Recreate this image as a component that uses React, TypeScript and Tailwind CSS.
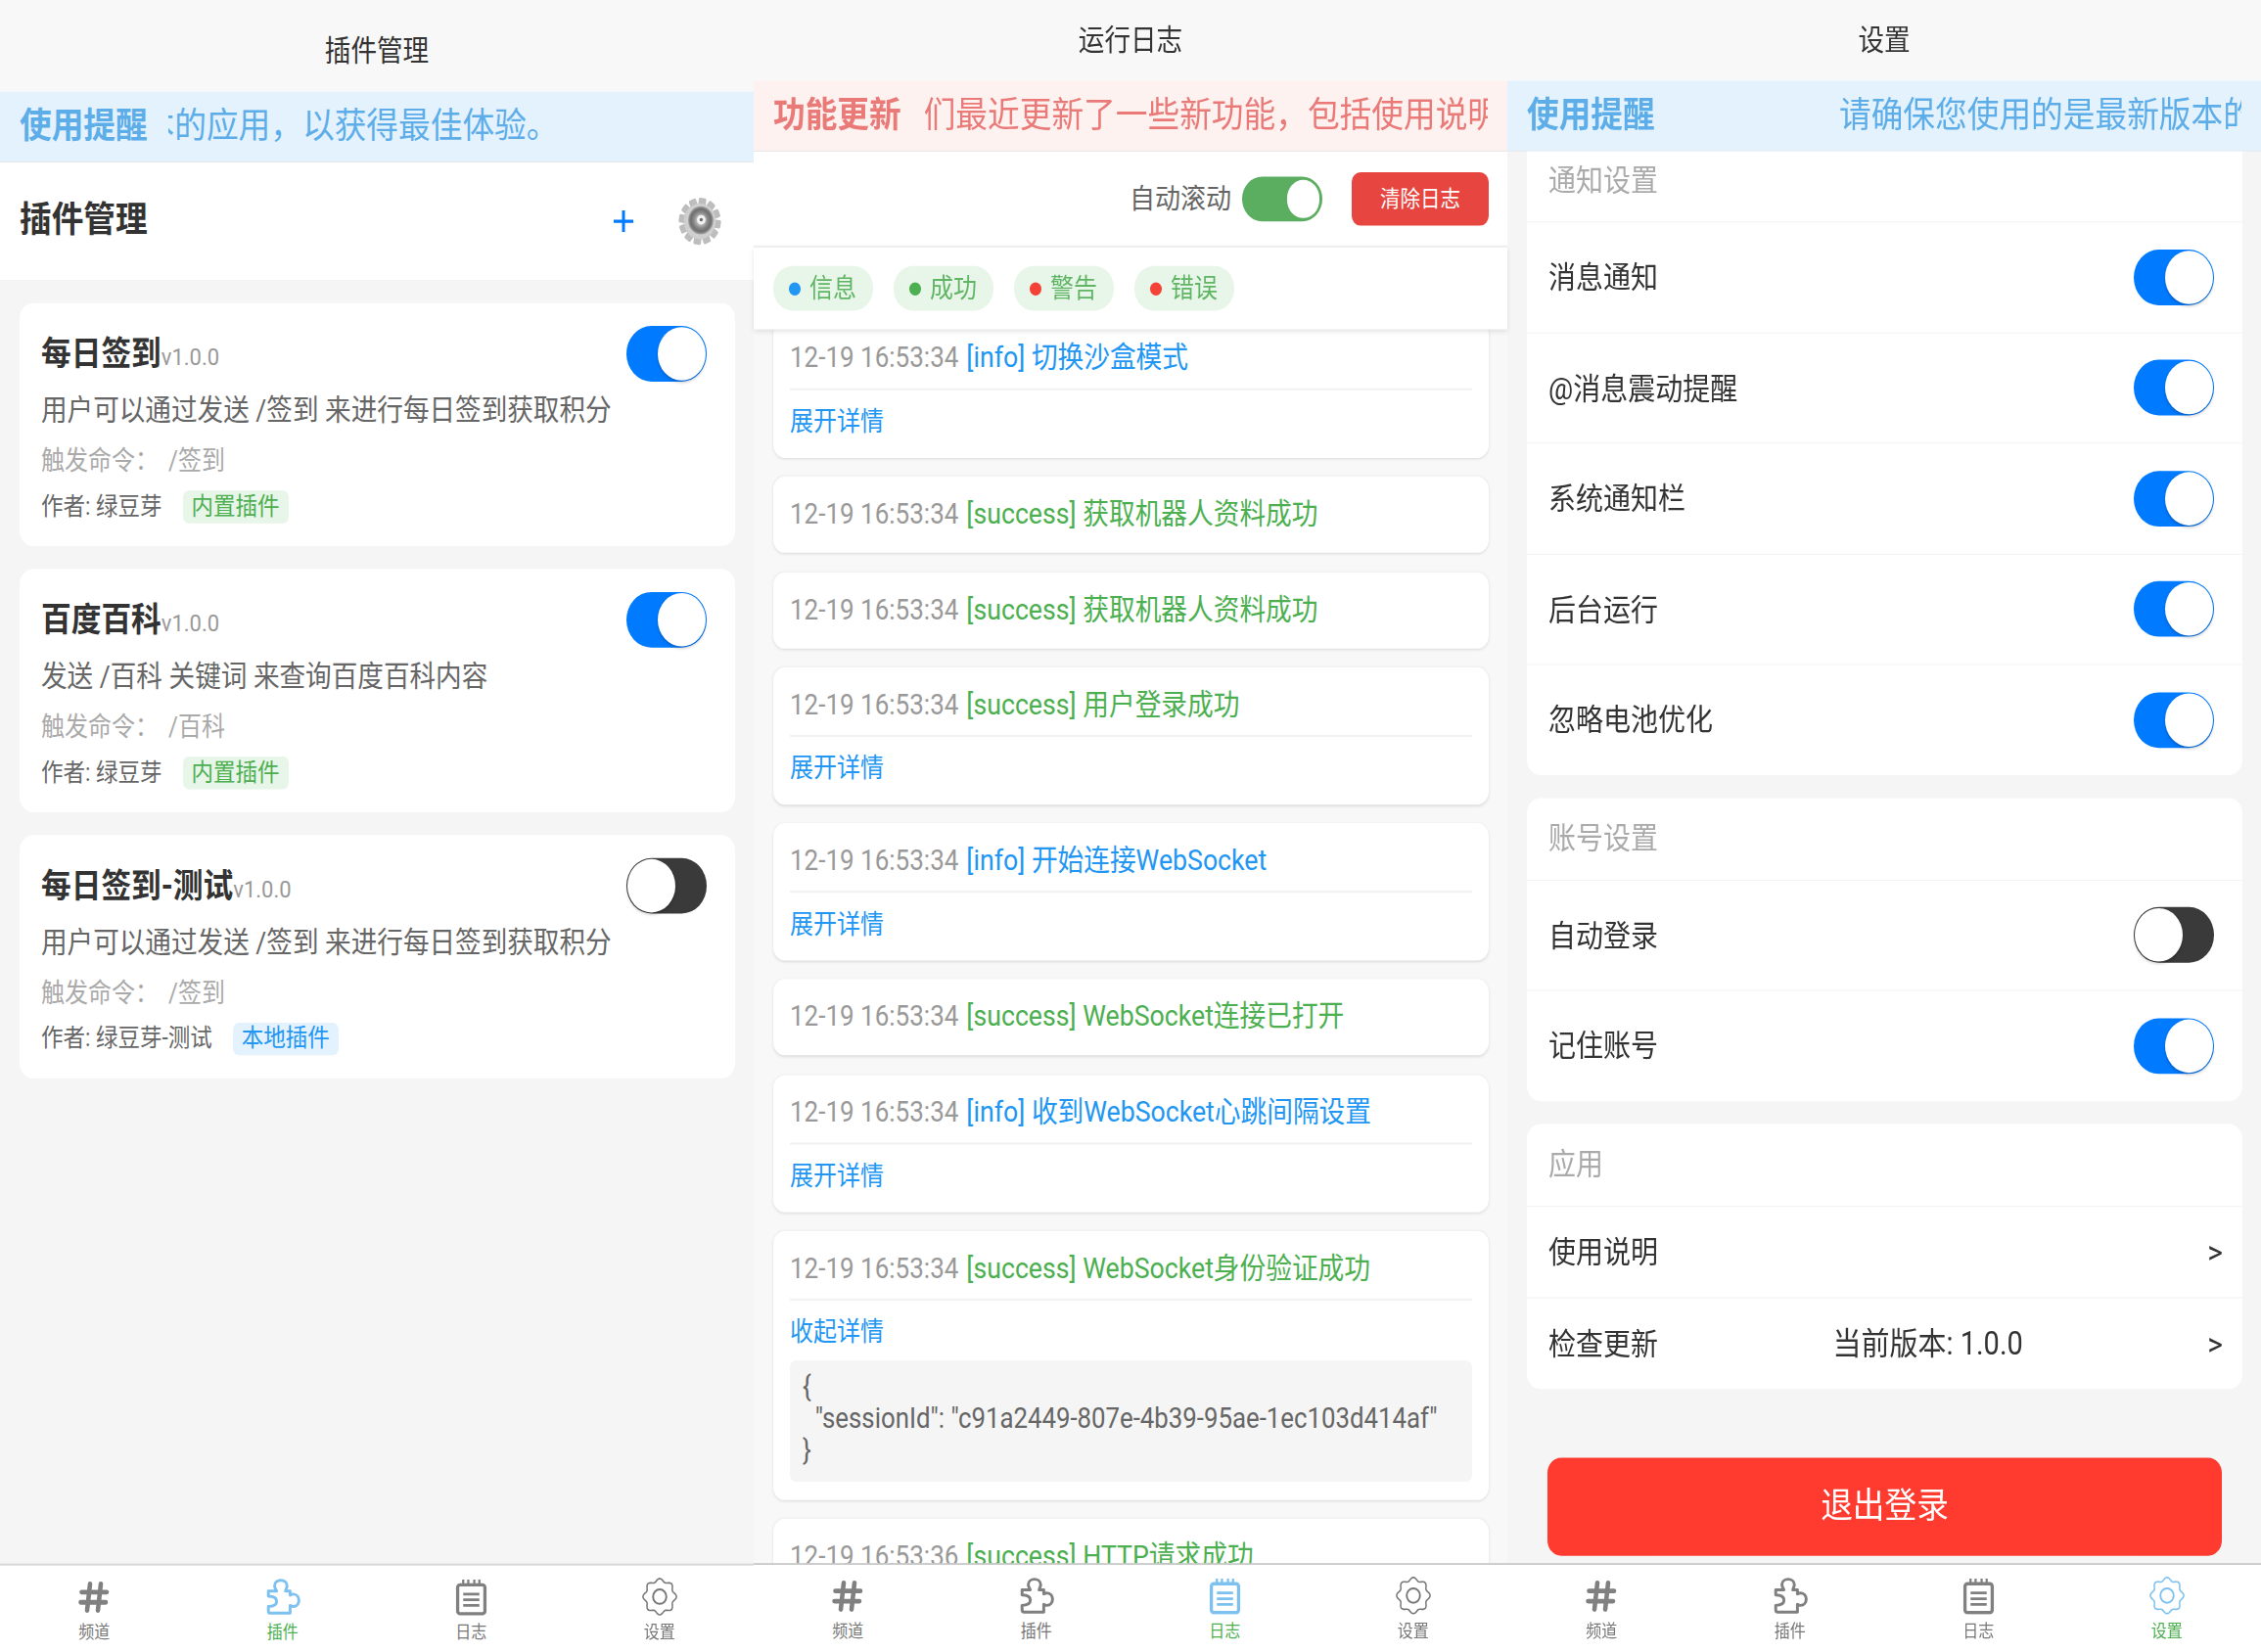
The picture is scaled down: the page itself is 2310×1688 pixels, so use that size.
import React from 'react';

// the reference is stretched vertically, so the whole page is laid out in flow and scaled once
const logs = [
    { level: 'info', msg: '切换沙盒模式', detail: true },
    { level: 'success', msg: '获取机器人资料成功' },
    { level: 'success', msg: '获取机器人资料成功' },
    { level: 'success', msg: '用户登录成功', detail: true },
    { level: 'info', msg: '开始连接WebSocket', detail: true },
    { level: 'success', msg: 'WebSocket连接已打开' },
    { level: 'info', msg: '收到WebSocket心跳间隔设置', detail: true },
    { level: 'success', msg: 'WebSocket身份验证成功', open: true },
    { level: 'success', msg: 'HTTP请求成功', time: '12-19 16:53:36' },
];

const plugins = [
    { name: '每日签到', desc: '用户可以通过发送 /签到 来进行每日签到获取积分', cmd: '/签到', author: '绿豆芽', on: true, local: false },
    { name: '百度百科', desc: '发送 /百科 关键词 来查询百度百科内容', cmd: '/百科', author: '绿豆芽', on: true, local: false },
    { name: '每日签到-测试', desc: '用户可以通过发送 /签到 来进行每日签到获取积分', cmd: '/签到', author: '绿豆芽-测试', on: false, local: true },
];

const Switch = ({ on }: { on: boolean }) => (
    <div className={`flex h-[51px] w-[82px] shrink-0 items-center rounded-full p-[1px] ${on ? 'justify-end bg-[#007aff]' : 'justify-start bg-[#3a3a3a]'}`}>
        <div className="h-[49px] w-[49px] rounded-full bg-white shadow-[0_2px_3px_rgba(0,0,0,0.2)]" />
    </div>
);

const HashIcon = ({ color }: { color: string }) => (
    <svg width="32" height="30" viewBox="0 0 32 32" preserveAspectRatio="none" fill="none" stroke={color} strokeWidth="4.6" strokeLinecap="round">
        <path d="M12 3 L9 29 M23 3 L20 29 M3.5 11 H29 M2.5 21 H28" />
    </svg>
);

const PuzzleIcon = ({ color }: { color: string }) => (
    <svg width="38" height="34" viewBox="0 0 36 36" preserveAspectRatio="none" fill="none" stroke={color} strokeWidth="2.8" strokeLinejoin="round">
        <path d="M4 12 H12 C11 10 10 9 10 7 C10 3.5 13 1.6 16 1.6 C19 1.6 22 3.5 22 7 C22 9 21 10 20.5 12 H25 V16 C26 15.5 27 15 28 15 C31.5 15 33.5 18 33.5 21 C33.5 24 31.5 27 28 27 C27 27 26 26.5 25 26 V33.5 H6 C4.5 33.5 4 33 4 31.5 V27 C8 27 12 26 12 22 C12 18 8 17 4 17 Z" />
    </svg>
);

const NoteIcon = ({ color }: { color: string }) => (
    <svg width="33" height="34" viewBox="0 0 32 36" preserveAspectRatio="none" fill="none" stroke={color}>
        <rect x="2.5" y="6" width="27" height="28" rx="2.5" strokeWidth="3.2" />
        <path d="M8 1 V7 M13 1 V7 M19 1 V7 M24 1 V7" strokeWidth="2.2" />
        <path d="M8 15 H24 M8 20.5 H24 M8 26 H24" strokeWidth="2.6" />
    </svg>
);

const cogPath = (() => {
    const pts: string[] = [];
    for (let i = 0; i < 96; i++) {
        const a = (i / 96) * Math.PI * 2;
        const r = 15.6 + 1.5 * Math.cos(a * 8);
        pts.push(`${(18 + r * Math.sin(a)).toFixed(2)} ${(18 - r * Math.cos(a)).toFixed(2)}`);
    }
    return `M${pts.join(' L')} Z`;
})();

const CogIcon = ({ color }: { color: string }) => (
    <svg width="36" height="35" viewBox="0 0 36 36" preserveAspectRatio="none" fill="none" stroke={color}>
        <path d={cogPath} strokeWidth="1.5" />
        <circle cx="18" cy="18" r="6.8" strokeWidth="1.9" />
    </svg>
);

const GearImage = () => (
    <svg width="46" height="44" viewBox="0 0 46 46">
        <defs>
            <radialGradient id="disc" cx="0.5" cy="0.5" r="0.5">
                <stop offset="0.25" stopColor="#c8c8c8" />
                <stop offset="0.55" stopColor="#8a8a8a" />
                <stop offset="0.8" stopColor="#6e6e6e" />
                <stop offset="1" stopColor="#a5a5a5" />
            </radialGradient>
        </defs>
        {Array.from({ length: 12 }).map((_, i) => (
            <rect key={i} x="19" y="0.5" width="8" height="9" rx="1.5" fill="#bdbdbd" transform={`rotate(${i * 30 + 8} 23 23)`} />
        ))}
        <circle cx="23" cy="23" r="17" fill="#cfcfcf" />
        <circle cx="24" cy="22" r="13.5" fill="url(#disc)" />
        <circle cx="24.5" cy="21.5" r="4.6" fill="#f2f2f2" />
        <circle cx="24.5" cy="21.5" r="1.7" fill="#666" />
    </svg>
);

const Banner = ({ tone, title, text, offset }: { tone: 'blue' | 'red'; title: string; text: string; offset: string }) => (
    <div className={`flex h-[65px] shrink-0 items-center border-b border-[#e8e8e8] px-5 text-[32.7px] leading-[44px] ${tone === 'blue' ? 'bg-[#e3f2fd] text-[#5dade9]' : 'bg-[#fef2f1] text-[#e97a78]'}`}>
        <span className="w-[131px] shrink-0 font-bold">{title}</span>
        <div className={`min-w-0 flex-1 overflow-hidden ${tone === 'blue' ? 'ml-[21px]' : 'ml-[24px]'}`}>
            <div className={`whitespace-nowrap ${offset}`}>{text}</div>
        </div>
    </div>
);

const TabBar = ({ active, first }: { active: number; first?: boolean }) => {
    const tabs = [
        { label: '频道', Icon: HashIcon },
        { label: '插件', Icon: PuzzleIcon },
        { label: '日志', Icon: NoteIcon },
        { label: '设置', Icon: CogIcon },
    ];
    return (
        <div className={`flex h-[81px] shrink-0 bg-white pt-[11px] ${first ? 'border-t-2 border-[#d9d9d9]' : 'border-t border-[#a8a8a8]'}`}>
            {tabs.map(({ label, Icon }, i) => (
                <div key={label} className="flex flex-1 flex-col items-center">
                    <div className="flex h-[35px] items-center">
                        <Icon color={i === active ? '#7cc1ef' : i === 3 ? '#777777' : '#808080'} />
                    </div>
                    <span className={`mt-[6px] text-[16px] leading-[20px] ${i === active ? 'text-[#4caf50]' : 'text-[#777777]'}`}>{label}</span>
                </div>
            ))}
        </div>
    );
};

const PluginCard = ({ p }: { p: (typeof plugins)[number] }) => (
    <div className="h-[223px] shrink-0 rounded-[14px] bg-white pl-[22px] pr-[29px] pt-[21px]">
        <div className="flex h-[51px] items-center justify-between">
            <div className="flex items-baseline">
                <span className="text-[30.7px] font-bold leading-[42px] text-[#333333]">{p.name}</span>
                <span className="text-[22px] text-[#999999]">v1.0.0</span>
            </div>
            <Switch on={p.on} />
        </div>
        <div className="mt-[8px] text-[26.6px] leading-[36px] text-[#666666]">{p.desc}</div>
        <div className="mt-[13px] text-[24px] leading-[32px] text-[#aaaaaa]">
            触发命令：<span className="ml-[10px]">{p.cmd}</span>
        </div>
        <div className="mt-[9px] flex items-center text-[22.5px] text-[#666666]">
            <span>作者: {p.author}</span>
            <span className={`ml-[21px] flex h-[30px] items-center rounded-[6px] px-[9px] ${p.local ? 'bg-[#e3f2fd] text-[#2196f3]' : 'bg-[#e8f5e9] text-[#4caf50]'}`}>
                {p.local ? '本地插件' : '内置插件'}
            </span>
        </div>
    </div>
);

const PluginPanel = () => (
    <div className="flex h-full min-h-0 flex-col">
        <div className="flex h-[84px] shrink-0 items-center justify-center bg-[#f8f8f8] pt-[10px] text-[26.6px] text-[#333333]">插件管理</div>
        <Banner tone="blue" title="使用提醒" text="请确保您使用的是最新版本的应用，以获得最佳体验。" offset="-ml-[386px]" />
        <div className="flex h-[109px] shrink-0 items-center justify-between border-b border-[#eeeeee] bg-white pl-5 pr-[32px]">
            <span className="text-[32.7px] font-bold text-[#333333]">插件管理</span>
            <div className="flex items-center gap-[45px]">
                <svg width="20" height="20" viewBox="0 0 20 20" stroke="#007aff" strokeWidth="3">
                    <path d="M10 0 V20 M0 10 H20" />
                </svg>
                <GearImage />
            </div>
        </div>
        <div className="flex min-h-0 flex-1 flex-col gap-[21px] overflow-hidden bg-[#f5f5f5] pl-5 pr-[19px] pt-[20px]">
            {plugins.map((p) => (
                <PluginCard key={p.name} p={p} />
            ))}
        </div>
        <TabBar active={1} first />
    </div>
);

const chips = [
    { label: '信息', dot: 'bg-[#2196f3]' },
    { label: '成功', dot: 'bg-[#4caf50]' },
    { label: '警告', dot: 'bg-[#f44336]' },
    { label: '错误', dot: 'bg-[#f44336]' },
];

const LogCard = ({ log }: { log: (typeof logs)[number] }) => {
    const levelColor = log.level === 'info' ? 'text-[#2196f3]' : 'text-[#4caf50]';
    return (
        <div className="shrink-0 rounded-[12px] bg-white px-[17px] pt-[16px] shadow-[0_1px_3px_rgba(0,0,0,0.12)]">
            <div className="flex h-[36px] items-center whitespace-nowrap leading-[36px]">
                <span className="text-[26px] text-[#999999]">{log.time ?? '12-19 16:53:34'}</span>
                <span className={`ml-[8px] text-[26.7px] ${levelColor}`}>[{log.level}] {log.msg}</span>
            </div>
            {log.detail || log.open ? (
                <div className="mt-[10px] border-t-2 border-[#f2f2f2] pb-[17px] pt-[13px]">
                    <div className="text-[24px] leading-[32px] text-[#2196f3]">{log.open ? '收起详情' : '展开详情'}</div>
                    {log.open && (
                        <pre className="mt-[10px] h-[111px] rounded-[6px] bg-[#f5f5f5] px-[13px] pt-[10px] text-[25.8px] leading-[29px] text-[#666666] [font-family:inherit]">
                            {'{\n  "sessionId": "c91a2449-807e-4b39-95ae-1ec103d414af"\n}'}
                        </pre>
                    )}
                </div>
            ) : (
                <div className="h-[18px]" />
            )}
        </div>
    );
};

const LogPanel = () => (
    <div className="flex h-full min-h-0 flex-col">
        <div className="flex h-[74px] shrink-0 items-center justify-center bg-[#f8f8f8] text-[26.6px] text-[#333333]">运行日志</div>
        <Banner tone="red" title="功能更新" text="我们最近更新了一些新功能，包括使用说明和检查更新" offset="-ml-[34px]" />
        <div className="flex h-[88px] shrink-0 items-center justify-end border-b-2 border-[#f0f0f0] bg-white pr-[19px]">
            <span className="text-[26px] text-[#666666]">自动滚动</span>
            <div className="ml-[11px] flex h-[41px] w-[82px] items-center justify-end rounded-full bg-[#5bad5f] pr-[3px]">
                <div className="h-[35px] w-[33px] rounded-full bg-white" />
            </div>
            <div className="ml-[30px] flex h-[49px] w-[140px] items-center justify-center rounded-[9px] bg-[#e7453f] text-[20.5px] text-white">清除日志</div>
        </div>
        <div className="relative z-10 flex h-[75px] shrink-0 items-center gap-[21px] bg-white px-5 shadow-[0_2px_5px_rgba(0,0,0,0.1)]">
            {chips.map((c) => (
                <div key={c.label} className="flex h-[41px] w-[102px] items-center rounded-[20px] bg-[#e8f5e9] pl-[16px] text-[24px] text-[#5fb563]">
                    <span className={`h-[12px] w-[12px] rounded-full ${c.dot}`} />
                    <span className="ml-[9px]">{c.label}</span>
                </div>
            ))}
        </div>
        <div className="min-h-0 flex-1 overflow-hidden bg-[#f8f8f8] pl-5 pr-[19px]">
            <div className="-mt-[8px] flex flex-col gap-[17.3px]">
                {logs.map((log, i) => (
                    <LogCard key={i} log={log} />
                ))}
            </div>
        </div>
        <TabBar active={2} />
    </div>
);

const Row = ({ label, children, tall = true }: { label: string; children?: React.ReactNode; tall?: boolean }) => (
    <div className={`flex items-center justify-between border-t border-[#f4f4f4] pl-[22px] text-[28px] text-[#333333] ${tall ? 'h-[101.5px] pr-[29px]' : 'h-[84px] pr-[20px]'}`}>
        <span className="mt-[2px]">{label}</span>
        {children}
    </div>
);

const Section = ({ title, children }: { title: string; children: React.ReactNode }) => (
    <div className="shrink-0 rounded-[14px] bg-white">
        <div className="flex h-[75px] items-center pl-[22px] text-[28px] text-[#aaaaaa]">{title}</div>
        {children}
    </div>
);

const SettingsPanel = () => (
    <div className="flex h-full min-h-0 flex-col">
        <div className="flex h-[74px] shrink-0 items-center justify-center bg-[#f8f8f8] text-[26.6px] text-[#333333]">设置</div>
        <Banner tone="blue" title="使用提醒" text="请确保您使用的是最新版本的应用，以获得最佳体验。" offset="ml-[167px]" />
        <div className="min-h-0 flex-1 overflow-hidden bg-[#f5f5f5] pl-5 pr-[19px]">
            <div className="-mt-[11px] flex flex-col gap-[21px]">
                <Section title="通知设置">
                    {['消息通知', '@消息震动提醒', '系统通知栏', '后台运行', '忽略电池优化'].map((t) => (
                        <Row key={t} label={t}>
                            <Switch on />
                        </Row>
                    ))}
                </Section>
                <Section title="账号设置">
                    <Row label="自动登录">
                        <Switch on={false} />
                    </Row>
                    <Row label="记住账号">
                        <Switch on />
                    </Row>
                </Section>
                <Section title="应用">
                    <Row label="使用说明" tall={false}>
                        <span className="text-[30px]">&gt;</span>
                    </Row>
                    <Row label="检查更新" tall={false}>
                        <span className="mr-[10px] mt-[2px] text-[29px]">当前版本: 1.0.0</span>
                        <span className="text-[30px]">&gt;</span>
                    </Row>
                </Section>
            </div>
            <div className="mx-[21px] mt-[63px] flex h-[90px] items-center justify-center rounded-[14px] bg-[#ff3b30] text-[32.7px] text-white">退出登录</div>
        </div>
        <TabBar active={3} />
    </div>
);

export default function App() {
    return (
        <div className="h-[1688px] w-[2310px] overflow-hidden bg-white [font-family:Roboto,'Noto_Sans_CJK_SC',sans-serif]">
            <div className="grid h-[1515.3px] origin-top-left scale-y-[1.114] grid-cols-3 grid-rows-1">
                <PluginPanel />
                <LogPanel />
                <SettingsPanel />
            </div>
        </div>
    );
}
